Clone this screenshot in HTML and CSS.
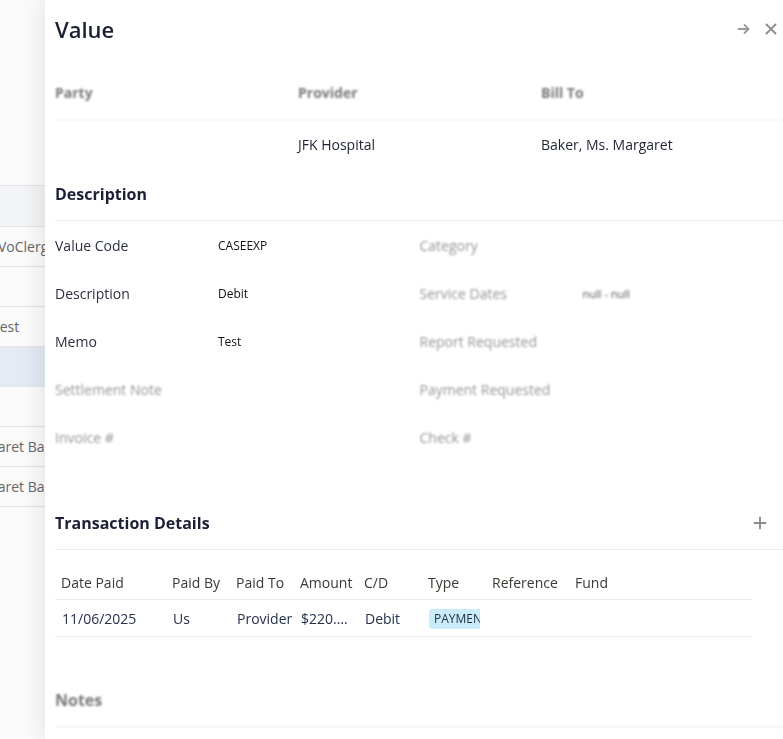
FILE: index.html
```html
<!DOCTYPE html>
<html lang="en">
<head>
    <meta charset="UTF-8">
    <meta name="viewport" content="width=device-width, initial-scale=1.0">
    <title>Value</title>
    <link rel="stylesheet" href="styles.css">
</head>
<body>
    <div class="page">
        <div class="list">
            <div class="list-row list-head"></div>
            <div class="list-row"><span class="cut-1">VoClergy</span></div>
            <div class="list-row"></div>
            <div class="list-row"><span class="cut-2">Test</span></div>
            <div class="list-row selected"></div>
            <div class="list-row"></div>
            <div class="list-row"><span class="cut-3">Margaret Baker</span></div>
            <div class="list-row"><span class="cut-3">Margaret Baker</span></div>
        </div>
    </div>

    <aside class="drawer">
        <div class="drawer-header">
            <h1>Value</h1>
            <div class="drawer-actions">
                <svg class="icon" width="14" height="14" viewBox="0 0 14 14">
                    <path d="M1.5 7h10M7.5 3l4 4-4 4" fill="none" stroke="#9a9a9a" stroke-width="1.8" stroke-linecap="round" stroke-linejoin="round"/>
                </svg>
                <svg class="icon" width="14" height="14" viewBox="0 0 14 14">
                    <path d="M2.5 2.5l9 9M11.5 2.5l-9 9" fill="none" stroke="#8a8a8a" stroke-width="1.9" stroke-linecap="round"/>
                </svg>
            </div>
        </div>

        <div class="party-grid">
            <div class="party-head blurred">Party</div>
            <div class="party-head blurred">Provider</div>
            <div class="party-head blurred">Bill To</div>
            <div class="party-value"></div>
            <div class="party-value">JFK Hospital</div>
            <div class="party-value">Baker, Ms. Margaret</div>
        </div>

        <h2 class="section-title">Description</h2>
        <div class="fields">
            <div class="field"><span class="field-label">Value Code</span><span class="field-value">CASEEXP</span></div>
            <div class="field"><span class="field-label blurred">Category</span><span class="field-value"></span></div>
            <div class="field"><span class="field-label">Description</span><span class="field-value">Debit</span></div>
            <div class="field"><span class="field-label blurred">Service Dates</span><span class="field-value small blurred">null - null</span></div>
            <div class="field"><span class="field-label">Memo</span><span class="field-value">Test</span></div>
            <div class="field"><span class="field-label blurred">Report Requested</span><span class="field-value"></span></div>
            <div class="field"><span class="field-label blurred">Settlement Note</span><span class="field-value"></span></div>
            <div class="field"><span class="field-label blurred">Payment Requested</span><span class="field-value"></span></div>
            <div class="field"><span class="field-label blurred">Invoice #</span><span class="field-value"></span></div>
            <div class="field"><span class="field-label blurred">Check #</span><span class="field-value"></span></div>
        </div>

        <h2 class="section-title with-action">
            Transaction Details
            <svg class="icon add" width="14" height="14" viewBox="0 0 14 14">
                <path d="M7 1.5v11M1.5 7h11" fill="none" stroke="#8a8a8a" stroke-width="1.8" stroke-linecap="round"/>
            </svg>
        </h2>
        <table class="tx-table">
            <colgroup>
                <col style="width: 111px">
                <col style="width: 64px">
                <col style="width: 64px">
                <col style="width: 64px">
                <col style="width: 64px">
                <col style="width: 64px">
                <col style="width: 83px">
                <col>
            </colgroup>
            <thead>
                <tr>
                    <th>Date Paid</th>
                    <th>Paid By</th>
                    <th>Paid To</th>
                    <th>Amount</th>
                    <th>C/D</th>
                    <th>Type</th>
                    <th>Reference</th>
                    <th>Fund</th>
                </tr>
            </thead>
            <tbody>
                <tr>
                    <td>11/06/2025</td>
                    <td>Us</td>
                    <td>Provider</td>
                    <td><div class="clip">$220.000</div></td>
                    <td>Debit</td>
                    <td><div class="chip-box"><span class="chip">PAYMENT</span></div></td>
                    <td></td>
                    <td></td>
                </tr>
            </tbody>
        </table>

        <h2 class="section-title notes blurred">Notes</h2>
    </aside>
</body>
</html>
```

FILE: styles.css
```css
body {
    margin: 0;
    padding: 0;
    background: #fff;
    font-family: "Open Sans", "Noto Sans", sans-serif;
    color: #2b3040;
    overflow: hidden;
}
.page {
    height: 739px;
    background: #fbfbfb;
}
.list {
    padding-top: 185px;
}
.list-row {
    height: 39px;
    border-top: 1px solid #e3e5e9;
    font-size: 14px;
    line-height: 39px;
    color: #666;
    white-space: nowrap;
    overflow: hidden;
}
.list-row:last-child {
    border-bottom: 1px solid #e3e5e9;
}
.list-head {
    height: 40px;
    background: #f3f4f6;
}
.list-row.selected {
    background: #e4ebf5;
}
.cut-1 { margin-left: -2px; }
.cut-2 { margin-left: -8px; }
.cut-3 { margin-left: -36px; }

.drawer {
    position: fixed;
    top: 0;
    left: 45px;
    width: 749px;
    height: 739px;
    box-sizing: border-box;
    padding: 0 10px;
    background: #fff;
    box-shadow: 0 0 26px rgba(0, 0, 0, 0.12);
    overflow: hidden;
}
.drawer-header {
    height: 57px;
    display: flex;
    align-items: center;
    justify-content: space-between;
}
.drawer-header h1 {
    margin: 0;
    font-size: 22px;
    font-weight: 600;
    color: #1a2035;
    line-height: 30px;
}
.drawer-actions {
    display: flex;
    gap: 13px;
    padding-right: 6px;
}
.icon {
    display: block;
}
.blurred {
    filter: blur(0.85px);
}
.party-grid {
    display: grid;
    grid-template-columns: repeat(3, 1fr);
}
.party-head {
    padding: 26px 0 16px;
    font-size: 14px;
    font-weight: 700;
    line-height: 20px;
    color: #777;
    border-bottom: 1px solid #ebebeb;
}
.party-value {
    padding: 15px 0 0;
    height: 20px;
    font-size: 14px;
    line-height: 20px;
    color: #1f2433;
}
.section-title {
    margin: 28px 0 0;
    padding-bottom: 15px;
    font-size: 16px;
    font-weight: 700;
    line-height: 22px;
    color: #1a2035;
    border-bottom: 1px solid #ebebeb;
}
.section-title.with-action {
    display: flex;
    justify-content: space-between;
    align-items: center;
    margin-top: 51px;
    padding-right: 17px;
}
.section-title.notes {
    margin-top: 52px;
    color: #777;
}
.fields {
    display: grid;
    grid-template-columns: 1fr 1fr;
}
.field {
    display: grid;
    grid-template-columns: 163px 1fr;
    align-items: center;
    height: 48px;
}
.field-label {
    font-size: 14px;
    color: #2b3040;
}
.field-label.blurred {
    color: #959595;
}
.field-value {
    font-size: 12px;
    color: #111;
}
.field-value.small {
    font-size: 11px;
    color: #555;
}
.tx-table {
    width: 697px;
    margin-top: 16px;
    border-collapse: collapse;
    table-layout: fixed;
    font-size: 14px;
}
.tx-table th {
    height: 33px;
    padding: 0 6px;
    text-align: left;
    font-weight: 400;
    color: #3d3833;
    border-bottom: 1px solid #ebebeb;
    white-space: nowrap;
}
.tx-table td {
    height: 35px;
    padding: 1px 6px 0 7px;
    color: #25304a;
    border-bottom: 1px solid #ebebeb;
    white-space: nowrap;
}
.clip {
    overflow: hidden;
    text-overflow: ellipsis;
}
.chip-box {
    overflow: hidden;
}
.chip {
    display: inline-block;
    padding: 0 5px;
    height: 20px;
    line-height: 20px;
    font-size: 12px;
    color: #1f2a44;
    background: #c9ecfa;
    border-radius: 4px;
}
```
